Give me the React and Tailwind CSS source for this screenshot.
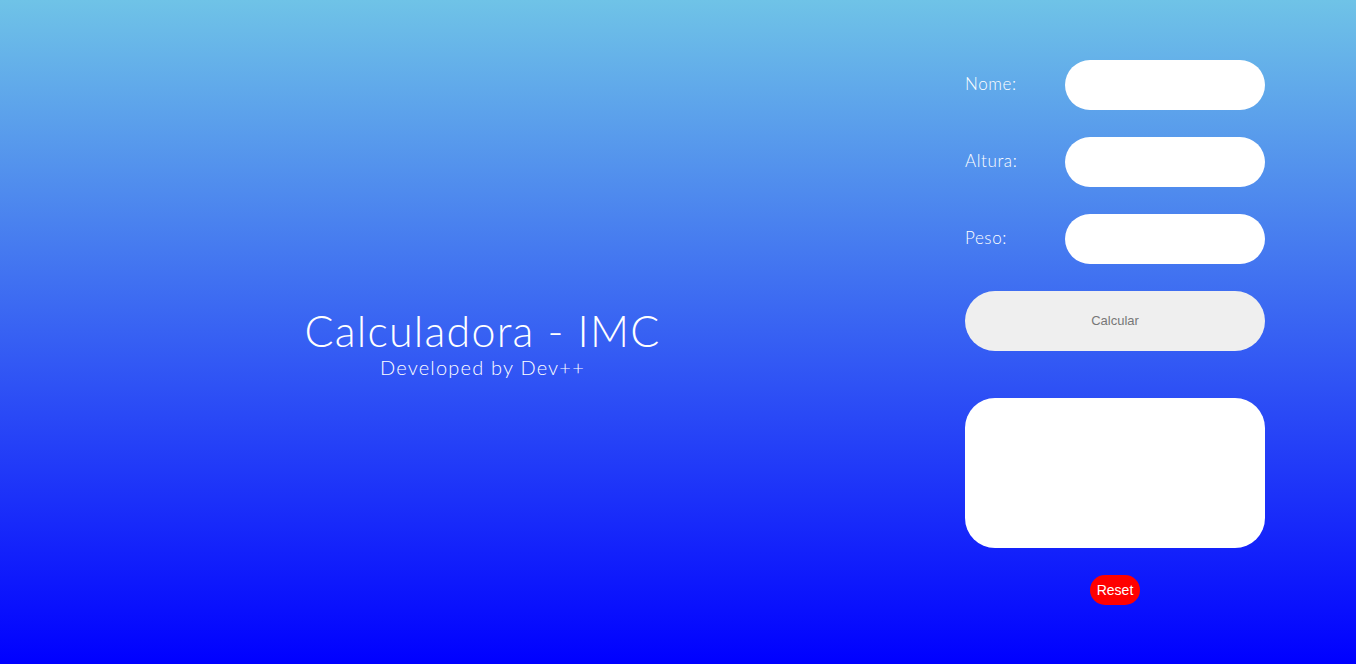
import React from 'react';

const fields = ['Nome:', 'Altura:', 'Peso:'];

export default function App() {
  return (
    <div className="flex h-[664px] w-full bg-[linear-gradient(to_bottom,#6fc3e7,#0000ff)] font-['Lato',sans-serif] text-white">
      {/* Title */}
      <div className="flex w-[965px] flex-col items-center justify-center pt-[22px]">
        <h1 className="text-[43px] font-light leading-[48px] tracking-[1.2px]">Calculadora - IMC</h1>
        <p className="text-[20px] font-light leading-[24px] tracking-[1.2px]">Developed by Dev++</p>
      </div>

      {/* Form */}
      <div className="flex w-[300px] flex-col pt-[60px]">
        {fields.map((label) => (
          <div key={label} className="mb-[27px] flex items-center justify-between">
            <label className="-mt-[3px] text-[17px] font-light leading-none tracking-[0.6px]">{label}</label>
            <input className="h-[50px] w-[200px] rounded-full bg-white px-5 text-black outline-none" />
          </div>
        ))}
        <button className="h-[60px] w-[300px] rounded-full bg-[#efefef] font-['Liberation_Sans',sans-serif] text-[13px] text-[#777777]">
          Calcular
        </button>
        <div className="mt-[47px] h-[150px] w-[300px] rounded-[30px] bg-white" />
        <div className="mt-[27px] flex justify-center">
          <button className="h-[30px] w-[50px] rounded-[15px] bg-[#ff0000] font-['Liberation_Sans',sans-serif] text-[14px] text-white">
            Reset
          </button>
        </div>
      </div>
    </div>
  );
}
